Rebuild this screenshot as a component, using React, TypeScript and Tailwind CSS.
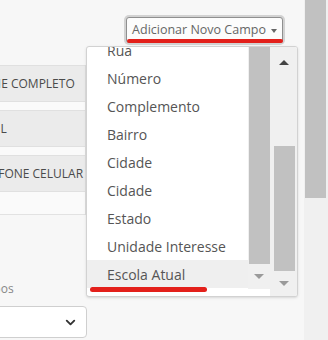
import { ChevronDown } from 'lucide-react';

const items = [
  'Rua',
  'Número',
  'Complemento',
  'Bairro',
  'Cidade',
  'Cidade',
  'Estado',
  'Unidade Interesse',
  'Escola Atual',
];

const rows = ['NOME COMPLETO', 'EMAIL', 'TELEFONE CELULAR'];

function ArrowUp({ color }: { color: string }) {
  return <div className="w-0 h-0 border-x-[5px] border-x-transparent border-b-[5px]" style={{ borderBottomColor: color }} />;
}

function ArrowDown({ color }: { color: string }) {
  return <div className="w-0 h-0 border-x-[5px] border-x-transparent border-t-[5px]" style={{ borderTopColor: color }} />;
}

export default function App() {
  return (
    <div className="flex w-[328px] h-[340px] overflow-hidden bg-[#f7f7f7] text-[#555] font-['Open_Sans',sans-serif]">
      <div className="relative w-[304px] h-full">
        {/* header with the add field button */}
        <div className="h-[65px] flex justify-end items-start pt-[17px] pr-[21px]">
          <button className="h-[26px] w-[157px] flex items-center justify-center whitespace-nowrap rounded-[3px] border border-[#8f8f8f] bg-[#fcfcfc] shadow-[0_0_0_2px_#d2d2d2] text-[12.5px] text-[#666]">
            Adicionar Novo Campo
            <span className="ml-[5px] mt-[1px] w-0 h-0 border-x-[3px] border-x-transparent border-t-[4px] border-t-[#666]" />
          </button>
        </div>

        {/* fields behind the menu */}
        <div className="w-[86px] overflow-hidden border-r border-[#dedede]">
          {rows.map((r, i) => (
            <div key={r}>
              <div className="h-[37px] flex items-center bg-[#ebebeb] border-y border-[#e0e0e0] whitespace-nowrap">
                <span className="-ml-[28px] text-[12px] text-[#4a4a4a]">{r}</span>
              </div>
              {i < rows.length - 1 && <div className="h-[8px] bg-[#fafafa]" />}
            </div>
          ))}
          <div className="h-[23px] bg-[#fafafa] border-b border-[#e2e2e2]" />
        </div>

        <div className="w-[86px] overflow-hidden mt-[66px] h-[16px] flex items-center whitespace-nowrap">
          <span className="-ml-[32px] text-[12px] text-[#888]">Campos</span>
        </div>
        <div className="w-[88px] overflow-hidden mt-[9px]">
          <div className="-ml-[10px] w-[97px] h-[32px] flex items-center justify-end pr-[8px] bg-white border border-[#cfcfcf] rounded-[4px]">
            <ChevronDown size={15} strokeWidth={3} color="#333" />
          </div>
        </div>

        {/* dropdown menu */}
        <div className="absolute left-[86px] top-[46px] w-[212px] h-[251px] bg-white border border-[#d2d2d2] rounded-[3px] overflow-hidden flex shadow-sm">
          <div className="w-[183px] flex flex-col">
            <div className="h-[242px] flex">
              <div className="w-[161px] overflow-hidden">
                <div className="-mt-[11px]">
                  {items.map((it, i) => (
                    <div
                      key={i}
                      className={`h-[28px] flex items-center pl-[20px] text-[14px] text-[#555] whitespace-nowrap ${i === items.length - 1 ? 'bg-[#efefef]' : ''}`}
                    >
                      {it}
                    </div>
                  ))}
                </div>
              </div>
              <div className="w-[22px] bg-[#f0f0f0] flex flex-col">
                <div className="ml-[1px] w-[21px] h-[217px] bg-[#c1c1c1]" />
                <div className="flex-1 flex items-center justify-center">
                  <ArrowDown color="#9a9a9a" />
                </div>
              </div>
            </div>
            <div className="h-[6px] bg-white" />
          </div>
          <div className="flex-1 bg-[#f0f0f0] flex flex-col">
            <div className="h-[30px] flex items-center justify-center">
              <ArrowUp color="#444" />
            </div>
            <div className="h-[69px]" />
            <div className="ml-[4px] w-[21px] h-[125px] bg-[#c1c1c1]" />
            <div className="flex-1 flex items-center justify-center">
              <ArrowDown color="#9a9a9a" />
            </div>
          </div>
        </div>

        {/* red annotation marks */}
        <div className="absolute left-[127px] top-[39px] w-[156px] h-[4px] rounded-full bg-[#e3201b]" />
        <div className="absolute left-[90px] top-[287px] w-[117px] h-[5px] rounded-full bg-[#e3201b]" />
      </div>

      {/* page scrollbar */}
      <div className="w-[24px] h-full bg-[#f0f0f0]">
        <div className="ml-[1px] w-[21px] h-[198px] bg-[#c1c1c1]" />
      </div>
    </div>
  );
}
